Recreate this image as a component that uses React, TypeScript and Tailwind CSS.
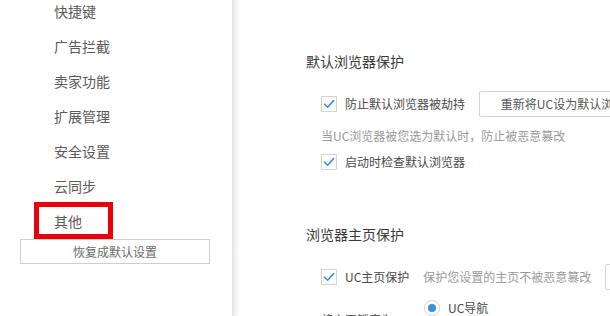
const font = { fontFamily: '"Microsoft YaHei", "Noto Sans CJK SC", "Noto Sans", sans-serif' };

const sidebarItems = ["快捷键", "广告拦截", "卖家功能", "扩展管理", "安全设置", "云同步", "其他"];

function CheckBox() {
  return (
    <span className="flex h-[16px] w-[16px] shrink-0 items-center justify-center border border-[#d4d4d4] bg-white">
      <svg width="12" height="10" viewBox="0 0 12 10" fill="none">
        <path d="M1.5 5.2 L4.6 8.2 L10.6 1.6" stroke="#3c8fdc" strokeWidth="1.6" strokeLinecap="round" strokeLinejoin="round" />
      </svg>
    </span>
  );
}

function Radio() {
  return (
    <span className="flex h-[16px] w-[16px] shrink-0 items-center justify-center rounded-full border border-[#d4d4d4] bg-white">
      <span className="h-[8px] w-[8px] rounded-full bg-[#3c8fdc]" />
    </span>
  );
}

export default function App() {
  return (
    <div className="relative flex h-[316px] w-[610px] overflow-hidden bg-white" style={font}>
      <aside className="w-[232px] shrink-0 bg-white">
        <ul className="-mt-[6px] pl-[54px]">
          {sidebarItems.map((item) => (
            <li key={item} className="flex h-[35px] items-center text-[14px] text-[#5a5a5a]">
              {item}
            </li>
          ))}
        </ul>
        <button className="ml-[20px] flex h-[25px] w-[190px] items-center justify-center border border-[#cfcfcf] bg-white text-[12px] text-[#6a6a6a]">
          恢复成默认设置
        </button>
      </aside>
      <div className="w-[8px] shrink-0 bg-gradient-to-r from-[#e4e4e4] via-[#f3f3f3] to-white" />

      <main className="min-w-0 flex-1 pl-[66px] pt-[51px]">
        <h2 className="text-[14px] leading-[20px] text-[#3a3a3a]">默认浏览器保护</h2>

        <div className="mt-[20px] flex h-[26px] items-center pl-[15px]">
          <CheckBox />
          <span className="ml-[8px] whitespace-nowrap text-[12px] text-[#4a4a4a]">防止默认浏览器被劫持</span>
          <button className="ml-[14px] flex h-[26px] w-[180px] shrink-0 items-center justify-center rounded-[2px] border border-[#d4d4d4] bg-white text-[12px] text-[#555]">
            重新将UC设为默认浏览器
          </button>
        </div>

        <p className="mt-[10px] whitespace-nowrap pl-[15px] text-[12px] leading-[18px] text-[#9a9a9a]">
          当UC浏览器被您选为默认时，防止被恶意篡改
        </p>

        <div className="mt-[8px] flex h-[18px] items-center pl-[15px]">
          <CheckBox />
          <span className="ml-[8px] whitespace-nowrap text-[12px] text-[#4a4a4a]">启动时检查默认浏览器</span>
        </div>

        <h2 className="mt-[53px] text-[14px] leading-[20px] text-[#3a3a3a]">浏览器主页保护</h2>

        <div className="mt-[20px] flex h-[26px] items-center pl-[15px]">
          <CheckBox />
          <span className="ml-[8px] whitespace-nowrap text-[12px] text-[#4a4a4a]">UC主页保护</span>
          <span className="ml-[14px] whitespace-nowrap text-[12px] text-[#9a9a9a]">保护您设置的主页不被恶意篡改</span>
          <span className="ml-[14px] h-[26px] w-[120px] shrink-0 rounded-[2px] border border-[#d4d4d4]" />
        </div>

        <div className="mt-[10px] flex items-start pl-[15px]">
          <span className="mt-[11px] w-[103px] shrink-0 whitespace-nowrap text-[12px] leading-[18px] text-[#4a4a4a]">将主页锁定为</span>
          <Radio />
          <span className="ml-[8px] whitespace-nowrap text-[12px] leading-[16px] text-[#4a4a4a]">UC导航</span>
        </div>
      </main>

      <div className="absolute left-[34px] top-[202px] h-[37px] w-[79px] border-[5px] border-[#e8000b]" />
    </div>
  );
}
